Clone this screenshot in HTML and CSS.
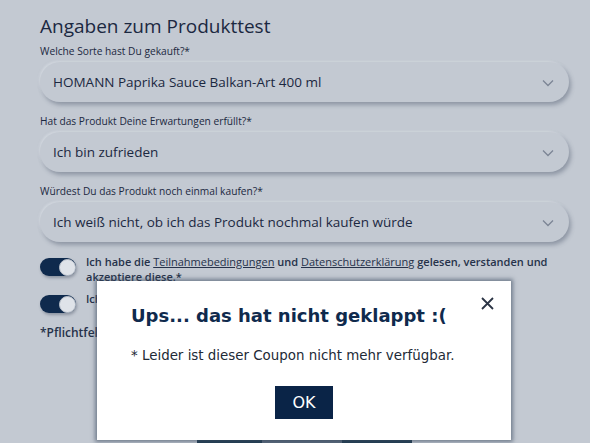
FILE: index.html
```html
<!DOCTYPE html>
<html lang="de">
<head>
  <meta charset="UTF-8" />
  <title>Produkttest</title>
  <link rel="stylesheet" href="styles.css">
</head>
<body>
  <div class="page">
    <h2>Angaben zum Produkttest</h2>

    <label class="field-label">Welche Sorte hast Du gekauft?*</label>
    <div class="select">
      <span>HOMANN Paprika Sauce Balkan-Art 400 ml</span>
      <svg class="chev" width="12" height="8" viewBox="0 0 12 8"><path d="M1 1.5l5 5 5-5" fill="none" stroke="#7c8595" stroke-width="1.3"/></svg>
    </div>

    <label class="field-label">Hat das Produkt Deine Erwartungen erfüllt?*</label>
    <div class="select">
      <span>Ich bin zufrieden</span>
      <svg class="chev" width="12" height="8" viewBox="0 0 12 8"><path d="M1 1.5l5 5 5-5" fill="none" stroke="#7c8595" stroke-width="1.3"/></svg>
    </div>

    <label class="field-label">Würdest Du das Produkt noch einmal kaufen?*</label>
    <div class="select">
      <span>Ich weiß nicht, ob ich das Produkt nochmal kaufen würde</span>
      <svg class="chev" width="12" height="8" viewBox="0 0 12 8"><path d="M1 1.5l5 5 5-5" fill="none" stroke="#7c8595" stroke-width="1.3"/></svg>
    </div>

    <div class="check">
      <span class="toggle"><span class="knob"></span></span>
      <p>Ich habe die <a href="#">Teilnahmebedingungen</a> und <a href="#">Datenschutzerklärung</a> gelesen, verstanden und akzeptiere diese.*</p>
    </div>
    <div class="check">
      <span class="toggle"><span class="knob"></span></span>
      <p>Ich möchte den Newsletter erhalten.</p>
    </div>

    <p class="required">*Pflichtfelder</p>

    <div class="actions">
      <button class="dark" aria-label="Zurück"></button>
      <button class="mid" aria-label="Absenden"></button>
      <button class="dark last" aria-label="Weiter"></button>
    </div>
  </div>

  <div class="modal">
    <button class="close" aria-label="Schließen">
      <svg width="13" height="13" viewBox="0 0 13 13"><path d="M1 1l11 11M12 1L1 12" stroke="#2b3445" stroke-width="1.8"/></svg>
    </button>
    <h3>Ups... das hat nicht geklappt :(</h3>
    <p>* Leider ist dieser Coupon nicht mehr verfügbar.</p>
    <button class="ok">OK</button>
  </div>
</body>
</html>
```

FILE: styles.css
```css
body {
  margin: 0;
  background: #c3c9d2;
  font-family: "Open Sans", "Noto Sans", sans-serif;
  color: #1b2841;
  overflow: hidden;
  height: 443px;
}
.page {
  padding: 13px 21px 0 40px;
  display: flex;
  flex-direction: column;
}
h2 {
  margin: 0 0 3px;
  font-size: 19px;
  font-weight: 400;
  line-height: 27px;
  color: #1b2841;
}
.field-label {
  font-size: 10.2px;
  line-height: 16px;
  margin-bottom: 3px;
}
.select {
  height: 40px;
  border-radius: 20px;
  background: #c3c9d2;
  box-shadow: 2px 3px 4px rgba(80, 90, 110, 0.45), -1px -1px 2px rgba(230, 234, 240, 0.5);
  display: flex;
  align-items: center;
  justify-content: space-between;
  padding: 0 15px 0 13px;
  font-size: 13.5px;
  margin-bottom: 11px;
}
.chev { margin-top: 1px; }
.check {
  display: flex;
  align-items: flex-start;
  gap: 10px;
  margin-top: 0;
}
.check + .check { margin-top: 6px; }
.toggle {
  flex: none;
  width: 36px;
  height: 18px;
  border-radius: 9px;
  background: #0f2a4d;
  display: flex;
  justify-content: flex-end;
  align-items: center;
  margin-top: 5px;
  box-shadow: 1px 2px 3px rgba(60, 70, 90, 0.4);
}
.knob {
  width: 17px;
  height: 17px;
  border-radius: 50%;
  background: #dfe3e9;
  border: 1px solid #b9c0ca;
  box-sizing: border-box;
}
.check p {
  margin: 0;
  font-size: 11px;
  line-height: 15px;
  font-weight: 600;
  color: #26324a;
  padding-top: 1px;
}
.check a { color: #26324a; font-weight: 400; }
.required {
  margin: 11px 0 0;
  font-size: 12px;
  font-weight: 600;
  color: #26324a;
}
.actions {
  display: flex;
  justify-content: center;
  margin-top: 86px;
}
.actions button {
  border: none;
  height: 30px;
  width: 65px;
}
.actions .mid { width: 80px; }
.actions .last { width: 70px; }
.dark { background: #1d3a4f; }
.mid { background: #5a6a7d; }
.modal {
  position: absolute;
  left: 97px;
  top: 281px;
  width: 414px;
  height: 159px;
  box-sizing: border-box;
  background: #fff;
  box-shadow: 0 0 4px 2px rgba(60, 75, 95, 0.6);
  padding: 24px 0 0 34px;
  font-family: "DejaVu Sans", sans-serif;
}
.modal h3 {
  margin: 0;
  font-size: 18px;
  font-weight: 700;
  color: #0f2a4d;
}
.modal p {
  margin: 22px 0 0;
  font-size: 13.4px;
  color: #222a36;
}
.close {
  position: absolute;
  top: 16px;
  right: 17px;
  border: none;
  background: none;
  padding: 0;
}
.ok {
  display: block;
  margin: 23px 0 0 144px;
  width: 58px;
  height: 33px;
  border: none;
  background: #0a2447;
  color: #fff;
  font-family: "DejaVu Sans", sans-serif;
  font-size: 16px;
}
```
